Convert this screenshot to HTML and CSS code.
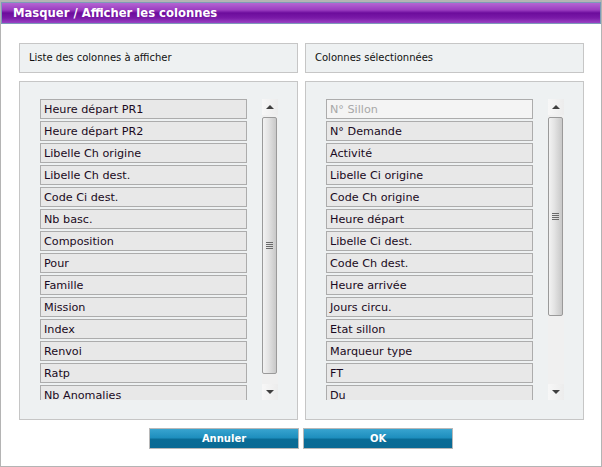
FILE: index.html
```html
<!DOCTYPE html>
<html lang="fr">
<head>
<meta charset="utf-8">
<title>Masquer / Afficher les colonnes</title>
<link rel="stylesheet" href="styles.css">
</head>
<body>
<div class="window">
  <div class="titlebar">Masquer / Afficher les colonnes</div>
  <div class="columns">
    <div class="col">
      <div class="header">Liste des colonnes à afficher</div>
      <div class="panel">
        <div class="list">
          <div class="items">
            <div class="item">Heure départ PR1</div>
            <div class="item">Heure départ PR2</div>
            <div class="item">Libelle Ch origine</div>
            <div class="item">Libelle Ch dest.</div>
            <div class="item">Code Ci dest.</div>
            <div class="item">Nb basc.</div>
            <div class="item">Composition</div>
            <div class="item">Pour</div>
            <div class="item">Famille</div>
            <div class="item">Mission</div>
            <div class="item">Index</div>
            <div class="item">Renvoi</div>
            <div class="item">Ratp</div>
            <div class="item">Nb Anomalies</div>
          </div>
          <div class="scrollbar">
            <div class="arrow up"></div>
            <div class="track">
              <div class="thumb thumb-left"><span class="grip"></span></div>
            </div>
            <div class="arrow down"></div>
          </div>
        </div>
      </div>
    </div>
    <div class="col">
      <div class="header">Colonnes sélectionnées</div>
      <div class="panel">
        <div class="list">
          <div class="items">
            <div class="item disabled">N° Sillon</div>
            <div class="item">N° Demande</div>
            <div class="item">Activité</div>
            <div class="item">Libelle Ci origine</div>
            <div class="item">Code Ch origine</div>
            <div class="item">Heure départ</div>
            <div class="item">Libelle Ci dest.</div>
            <div class="item">Code Ch dest.</div>
            <div class="item">Heure arrivée</div>
            <div class="item">Jours circu.</div>
            <div class="item">Etat sillon</div>
            <div class="item">Marqueur type</div>
            <div class="item">FT</div>
            <div class="item">Du</div>
          </div>
          <div class="scrollbar">
            <div class="arrow up"></div>
            <div class="track">
              <div class="thumb thumb-right"><span class="grip"></span></div>
            </div>
            <div class="arrow down"></div>
          </div>
        </div>
      </div>
    </div>
  </div>
  <div class="buttons">
    <button class="btn">Annuler</button>
    <button class="btn">OK</button>
  </div>
</div>
</body>
</html>
```

FILE: styles.css
```css
html, body {
  margin: 0;
  padding: 0;
  background: #ffffff;
}
body {
  font-family: "DejaVu Sans", Verdana, sans-serif;
}
.window {
  width: 602px;
  height: 467px;
  box-sizing: border-box;
  border: 1px solid #b4b4b4;
  border-top: 2px solid #b4b4b4;
  display: flex;
  flex-direction: column;
}
.titlebar {
  height: 22px;
  box-sizing: border-box;
  border: 1px solid #7c9ab8;
  background: linear-gradient(to bottom, #b466d2 0%, #9a3cc0 35%, #6c0c9c 50%, #7a1aa8 75%, #9a44c4 100%);
  color: #ffffff;
  font-weight: bold;
  font-size: 11.6px;
  line-height: 20px;
  padding-left: 11px;
}
.columns {
  display: flex;
  gap: 7px;
  padding: 19px 17px 0 18px;
}
.col {
  width: 279px;
  display: flex;
  flex-direction: column;
  gap: 8px;
}
.header {
  height: 30px;
  box-sizing: border-box;
  border: 1px solid #c6c6c6;
  background: #eef1f2;
  font-size: 10px;
  line-height: 28px;
  padding-left: 9px;
  color: #111;
}
.panel {
  height: 339px;
  box-sizing: border-box;
  border: 1px solid #c6c6c6;
  background: #eef1f2;
  padding: 17px 0 0 20px;
}
.list {
  display: flex;
  gap: 15px;
  height: 301px;
}
.items {
  width: 207px;
  height: 301px;
  overflow: hidden;
  display: flex;
  flex-direction: column;
  gap: 2px;
}
.item {
  flex: none;
  height: 20px;
  box-sizing: border-box;
  border: 1px solid #acacac;
  background: #e8e8e8;
  font-size: 11.2px;
  line-height: 19px;
  padding-left: 3px;
  color: #1a0a22;
  white-space: nowrap;
}
.item.disabled {
  background: #f4f4f4;
  color: #a8a8a8;
}
.scrollbar {
  width: 16px;
  height: 301px;
  display: flex;
  flex-direction: column;
  background: #f0f0f0;
}
.arrow {
  height: 16px;
  flex: none;
  position: relative;
  background: linear-gradient(to right, #f7f7f7, #ececec);
}
.arrow.up::after, .arrow.down::after {
  content: "";
  position: absolute;
  left: 4px;
  width: 0;
  height: 0;
  border-left: 4px solid transparent;
  border-right: 4px solid transparent;
}
.arrow.up::after {
  top: 6px;
  border-bottom: 4px solid #404040;
}
.arrow.down::after {
  top: 6px;
  border-top: 4px solid #404040;
}
.track {
  flex: 1;
  padding-top: 2px;
}
.thumb {
  box-sizing: border-box;
  width: 15px;
  border: 1px solid #9a9a9a;
  border-radius: 2px;
  background: linear-gradient(to right, #f2f2f2 0%, #e4e4e4 40%, #c8c8c8 100%);
  display: flex;
  align-items: center;
  justify-content: center;
}
.thumb-left {
  height: 257px;
}
.thumb-right {
  height: 199px;
}
.grip {
  display: block;
  width: 7px;
  height: 7px;
  background: repeating-linear-gradient(to bottom, #6a6a6a 0, #6a6a6a 1px, transparent 1px, transparent 2px);
}
.buttons {
  display: flex;
  justify-content: center;
  gap: 4px;
  padding-top: 8px;
}
.btn {
  width: 150px;
  height: 21px;
  box-sizing: border-box;
  border: 1px solid #b8b8b8;
  background: linear-gradient(to bottom, #38a4d0 0%, #1e8fbe 45%, #0a6c96 55%, #0a6a94 100%);
  color: #ffffff;
  font-family: "DejaVu Sans", Verdana, sans-serif;
  font-weight: bold;
  font-size: 10px;
  padding: 0;
  margin: 0;
}
```
